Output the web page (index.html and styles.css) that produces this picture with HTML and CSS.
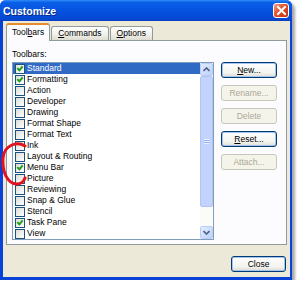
FILE: index.html
```html
<!DOCTYPE html>
<html>
<head>
    <title>Customize</title>
    <link rel="stylesheet" href="styles.css">
</head>
<body>
    <div class="window">
        <div class="titlebar">
            <span class="title">Customize</span>
            <button class="close-x" aria-label="Close">
                <svg width="11" height="11" viewBox="0 0 11 11"><path d="M2 2 L9 9 M9 2 L2 9" stroke="#fff" stroke-width="2" stroke-linecap="square"/></svg>
            </button>
        </div>

        <div class="client">
            <div class="tabs">
                <div class="tab active">Tool<u>b</u>ars</div>
                <div class="tab"><u>C</u>ommands</div>
                <div class="tab"><u>O</u>ptions</div>
            </div>

            <div class="panel">
                <div class="label">Toolbars:</div>
                <div class="panel-body">
                    <div class="listbox">
                        <div class="items">
                            <div class="item selected"><span class="check on"></span>Standard</div>
                            <div class="item"><span class="check on"></span>Formatting</div>
                            <div class="item"><span class="check"></span>Action</div>
                            <div class="item"><span class="check"></span>Developer</div>
                            <div class="item"><span class="check"></span>Drawing</div>
                            <div class="item"><span class="check"></span>Format Shape</div>
                            <div class="item"><span class="check"></span>Format Text</div>
                            <div class="item"><span class="check"></span>Ink</div>
                            <div class="item"><span class="check"></span>Layout &amp; Routing</div>
                            <div class="item"><span class="check on"></span>Menu Bar</div>
                            <div class="item"><span class="check"></span>Picture</div>
                            <div class="item"><span class="check"></span>Reviewing</div>
                            <div class="item"><span class="check"></span>Snap &amp; Glue</div>
                            <div class="item"><span class="check"></span>Stencil</div>
                            <div class="item"><span class="check on"></span>Task Pane</div>
                            <div class="item"><span class="check"></span>View</div>
                        </div>
                        <div class="scrollbar">
                            <div class="sb-btn">
                                <svg width="7" height="5" viewBox="0 0 7 5"><path d="M0.5 4 L3.5 1 L6.5 4" fill="none" stroke="#4d6185" stroke-width="1.6"/></svg>
                            </div>
                            <div class="sb-thumb"><span class="grip"></span></div>
                            <div class="sb-track"></div>
                            <div class="sb-btn">
                                <svg width="7" height="5" viewBox="0 0 7 5"><path d="M0.5 1 L3.5 4 L6.5 1" fill="none" stroke="#4d6185" stroke-width="1.6"/></svg>
                            </div>
                        </div>
                    </div>

                    <div class="buttons">
                        <button class="btn strong"><u>N</u>ew...</button>
                        <button class="btn" disabled>Rename...</button>
                        <button class="btn" disabled>Delete</button>
                        <button class="btn strong"><u>R</u>eset...</button>
                        <button class="btn" disabled>Attach...</button>
                    </div>
                </div>
            </div>

            <div class="footer">
                <button class="btn strong close-btn">Close</button>
            </div>
        </div>

        <!-- hand-drawn annotation -->
        <svg class="mark" width="30" height="48" viewBox="0 0 30 48">
            <path d="M25 5 C17 0 4 4 3 17 C2 30 7 43 17 43 C21 43 24 40 25 37" fill="none" stroke="#e3121c" stroke-width="3" stroke-linecap="round"/>
        </svg>
    </div>
</body>
</html>
```

FILE: styles.css
```css
body {
    margin: 0;
    background: #fff;
    font-family: "Liberation Sans", Arial, sans-serif;
    font-size: 8.5px;
    color: #000;
}

.window {
    position: relative;
    width: 292px;
    height: 280px;
    background: #0842d8;
    border-radius: 6px 6px 0 0;
    box-shadow: 3px 3px 3px rgba(0, 0, 0, 0.35);
    display: flex;
    flex-direction: column;
}

.titlebar {
    height: 21px;
    display: flex;
    align-items: center;
    justify-content: space-between;
    padding: 0 3px 0 3px;
    border-radius: 6px 6px 0 0;
    background: linear-gradient(#2f8cf7 0%, #0a5fe6 12%, #0553e0 50%, #0549d4 88%, #0a3fbe 100%);
}

.title {
    color: #fff;
    font-weight: bold;
    font-size: 10.5px;
    text-shadow: 1px 1px 0 #0a2a86;
}

.close-x {
    width: 16px;
    height: 15px;
    padding: 0;
    margin-top: -1px;
    border: 1px solid #fff;
    border-radius: 3px;
    background: linear-gradient(135deg, #f0a088 0%, #e2512a 45%, #c4300e 100%);
    display: flex;
    align-items: center;
    justify-content: center;
}

.client {
    flex: 1;
    margin: 0 2px 3px 3px;
    background: #ece9d8;
    padding: 3px 3px 0 3px;
    display: flex;
    flex-direction: column;
}

.tabs {
    display: flex;
    align-items: flex-end;
    height: 16px;
    position: relative;
    z-index: 1;
}

.tab {
    height: 13px;
    line-height: 13px;
    padding: 0 6px;
    margin-right: 1px;
    border: 1px solid #919b9c;
    border-bottom: none;
    border-radius: 3px 3px 0 0;
    background: linear-gradient(#fff, #f0f0ea 60%, #dedcd0);
}

.tab.active {
    height: 16px;
    line-height: 15px;
    padding: 0 5px;
    margin-bottom: -1px;
    border-top: 2px solid #e68b2c;
    background: #fcfcfe;
}

.panel {
    height: 205px;
    border: 1px solid #919b9c;
    background: #fcfcfe;
    padding: 8px 7px 0 5px;
    box-sizing: border-box;
}

.label {
    height: 13px;
    line-height: 10px;
}

.panel-body {
    display: flex;
    gap: 7px;
}

.listbox {
    width: 202px;
    height: 178px;
    border: 1px solid #7f9db9;
    background: #fff;
    display: flex;
    box-sizing: border-box;
}

.items {
    flex: 1;
}

.item {
    height: 11px;
    line-height: 11px;
    display: flex;
    align-items: center;
    padding-left: 2px;
    white-space: nowrap;
}

.item.selected {
    background: #316ac5;
    color: #fff;
}

.check {
    width: 8px;
    height: 8px;
    border: 1px solid #1c5180;
    background: linear-gradient(135deg, #dcdcd7, #fff);
    margin-right: 2px;
    position: relative;
    flex: none;
}

.check.on::after {
    content: "";
    position: absolute;
    left: 2px;
    top: 0;
    width: 2px;
    height: 4px;
    border: solid #21a121;
    border-width: 0 2px 2px 0;
    transform: rotate(40deg);
}

.scrollbar {
    width: 13px;
    display: flex;
    flex-direction: column;
    background: #fefefb;
}

.sb-btn {
    height: 13px;
    background: linear-gradient(135deg, #e3ecfe, #bcd0f8);
    border: 1px solid #b9cef7;
    border-radius: 2px;
    box-sizing: border-box;
    display: flex;
    align-items: center;
    justify-content: center;
}

.sb-thumb {
    height: 131px;
    background: #c3d3fd;
    border: 1px solid #aec4f5;
    border-radius: 2px;
    box-sizing: border-box;
    display: flex;
    align-items: center;
    justify-content: center;
}

.grip {
    width: 5px;
    height: 5px;
    background: repeating-linear-gradient(#eef4fe 0 1px, #8fb0f0 1px 2px);
}

.sb-track {
    flex: 1;
    background: #fbfbf8;
}

.buttons {
    display: flex;
    flex-direction: column;
    gap: 7px;
}

.btn {
    width: 56px;
    height: 16px;
    padding: 0;
    font-family: "Liberation Sans", Arial, sans-serif;
    font-size: 8.5px;
    color: #000;
    border: 1px solid #003c74;
    border-radius: 3px;
    background: linear-gradient(#fff, #f3f3ef 70%, #dcdcd2);
}

.btn.strong {
    box-shadow: inset 0 0 0 1px #a6c2f0;
}

.btn:disabled {
    color: #aca899;
    border-color: #c9c7ba;
    background: #f5f4ea;
    box-shadow: none;
}

.footer {
    flex: 1;
    display: flex;
    justify-content: flex-end;
    align-items: flex-start;
    padding: 11px 1px 0 0;
}

.close-btn {
    width: 55px;
}

.mark {
    position: absolute;
    left: 0;
    top: 141px;
}
```
